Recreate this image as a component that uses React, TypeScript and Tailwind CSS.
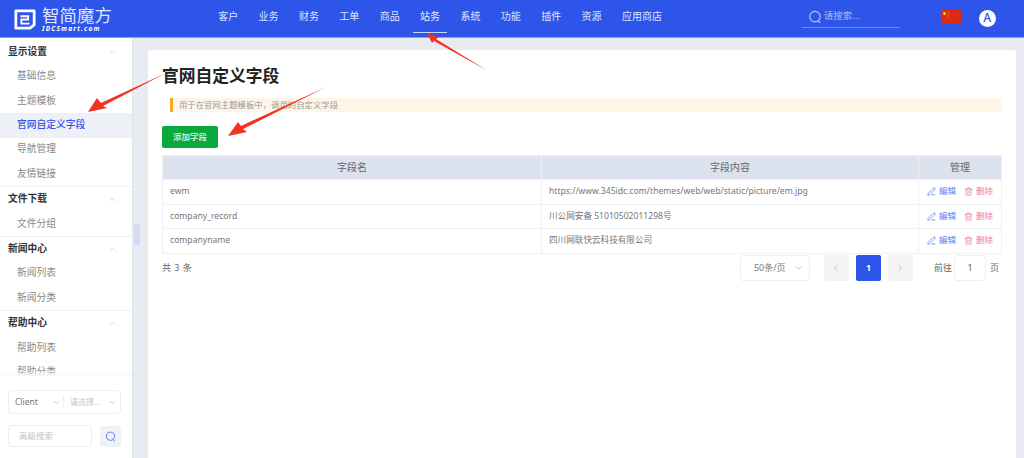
import { ChevronUp, ChevronDown, ChevronLeft, ChevronRight, PenLine, Trash2 } from "lucide-react";

const nav = ["客户", "业务", "财务", "工单", "商品", "站务", "系统", "功能", "插件", "资源", "应用商店"];

const groups = [
  { title: "显示设置", items: ["基础信息", "主题模板", "官网自定义字段", "导航管理", "友情链接"] },
  { title: "文件下载", items: ["文件分组"] },
  { title: "新闻中心", items: ["新闻列表", "新闻分类"] },
  { title: "帮助中心", items: ["帮助列表", "帮助分类"] },
];

const rows = [
  ["ewm", "https://www.345idc.com/themes/web/web/static/picture/em.jpg"],
  ["company_record", "川公网安备 51010502011298号"],
  ["companyname", "四川网联快云科技有限公司"],
];

function SearchIcon({ className }: { className: string }) {
  return (
    <svg viewBox="0 0 16 16" fill="none" stroke="currentColor" strokeWidth="1.3" className={className}>
      <circle cx="8" cy="7.6" r="6" />
      <path d="M11.6 12.4l2.2 2" strokeLinecap="round" />
    </svg>
  );
}

function Arrow({ points }: { points: string }) {
  return <polygon points={points} fill="#f5311f" />;
}

export default function App() {
  return (
    <div
      className="relative flex h-[458px] w-[1024px] flex-col overflow-hidden bg-[#e9ebf2] text-[10px] text-[#666]"
      style={{ fontFamily: '"Noto Sans", "Noto Sans CJK SC", sans-serif' }}
    >
      <header className="flex h-[38px] shrink-0 items-center border-b border-[#8aa0f0] bg-[#2e55e9] text-white">
        <div className="ml-[14px] flex w-[194px] shrink-0 items-center gap-[6px]">
          <svg viewBox="0 0 24 24" className="h-[22px] w-[22px]" fill="none" stroke="white">
            <path d="M2 3h20v15.500L17.500 22H2z" strokeWidth="3" strokeLinejoin="round" />
            <path d="M7 9h8.500v3.500H8v4.500h9" strokeWidth="2" />
          </svg>
          <div className="flex flex-col">
            <span className="text-[17.500px] leading-[20px] text-[#dfe6ff]">智简魔方</span>
            <span className="text-[6.500px] font-bold italic leading-[8px] tracking-[1.200px]">IDCSmart.com</span>
          </div>
        </div>
        <nav className="flex h-full shrink-0">
          {nav.map((n) => (
            <div
              key={n}
              className={`relative flex h-full items-center whitespace-nowrap px-[10.200px] pb-[5px] text-[10px] ${n === "站务" ? "text-[#eef1ff]" : "text-[#dfe6ff]"}`}
            >
              {n}
              {n === "站务" && <span className="absolute bottom-[4px] left-[3px] right-[3px] h-[1px] bg-[#c9d3fa]" />}
            </div>
          ))}
        </nav>
        <div className="mb-[9px] ml-[129.600px] flex h-[22px] w-[98px] shrink-0 items-center gap-[2px] self-end border-b border-[#6f8af0] pl-[6px] text-[9.500px] text-[#a9b9f6]">
          <SearchIcon className="h-[14px] w-[14px] text-[#b9c6f5]" />
          <span>请搜索...</span>
        </div>
        <svg viewBox="0 0 20 14" className="-mt-[3px] ml-[41px] h-[14px] w-[20px] shrink-0">
          <rect width="20" height="14" fill="#de2a12" />
          <circle cx="3.500" cy="3.500" r="1.400" fill="#f7d21e" />
          <circle cx="7" cy="2" r="0.500" fill="#f7d21e" />
          <circle cx="8" cy="4" r="0.500" fill="#f7d21e" />
          <circle cx="7" cy="6" r="0.500" fill="#f7d21e" />
        </svg>
        <div className="-mt-[1px] ml-[18px] flex h-[17px] w-[17px] shrink-0 items-center justify-center rounded-full bg-white text-[12px] font-medium text-[#2e55e9]">A</div>
      </header>

      <div className="flex min-h-0 flex-1">
        <aside className="relative h-full w-[133px] shrink-0 border-r border-[#e2e3e9] bg-white">
          <div className="h-[338px] overflow-hidden pt-[2px]">
            {groups.map((g) => (
              <section key={g.title} className="border-b border-[#f0f1f5]">
                <div className="flex h-[24.400px] items-center justify-between pl-[8px] pr-[14px] text-[9.750px] font-bold text-[#333]">
                  {g.title}
                  <ChevronUp size={11} strokeWidth={1} className="text-[#aaa]" />
                </div>
                {g.items.map((i) => (
                  <div
                    key={i}
                    className={`flex h-[24.400px] items-center pl-[17px] text-[9.750px] ${i === "官网自定义字段" ? "bg-[#eef0f7] font-medium text-[#2e55e9]" : "text-[#888]"}`}
                  >
                    {i}
                  </div>
                ))}
              </section>
            ))}
          </div>
          <div className="relative flex h-[82px] flex-col gap-[11px] bg-white px-[8px] pt-[14px]">
            <div className="absolute -top-[6px] left-0 right-0 h-[6px] bg-gradient-to-b from-transparent to-[#f8f9fe]" />
            <div className="flex h-[24px] w-[113px] items-center rounded-[4px] border border-[#eceef3] text-[8.500px]">
              <span className="w-[37px] shrink-0 pl-[6px] text-[#777]">Client</span>
              <ChevronDown size={9} className="ml-[6px] shrink-0 text-[#bbb]" />
              <span className="ml-[2px] h-[12px] w-px shrink-0 bg-[#eee]" />
              <span className="ml-[6px] w-[32px] shrink-0 whitespace-nowrap text-[8px] text-[#c4c4c4]">请选择...</span>
              <ChevronDown size={9} className="ml-[6px] shrink-0 text-[#bbb]" />
            </div>
            <div className="flex items-center gap-[8px]">
              <div className="flex h-[22px] w-[84px] items-center rounded-[4px] border border-[#eceef3] pl-[10px] text-[8.500px] text-[#c4c4c4]">高级搜索</div>
              <div className="flex h-[21px] w-[21px] items-center justify-center rounded-[4px] bg-[#f0f1f5]">
                <SearchIcon className="h-[11px] w-[11px] text-[#4f6fee]" />
              </div>
            </div>
          </div>
          <div className="absolute -right-[8px] top-[186px] flex h-[21px] w-[6px] items-center justify-center rounded-[2px] bg-[#d3daf3]">
            <ChevronLeft size={6} className="text-white" />
          </div>
        </aside>

        <main className="ml-[15px] mr-[8px] mt-[12px] flex min-w-0 flex-1 flex-col rounded-t-[3px] bg-white px-[14px]">
          <h1 className="mt-[14px] h-[24px] text-[16.750px] font-bold leading-[24px] text-[#222]">官网自定义字段</h1>
          <div className="ml-[8px] mt-[10px] flex h-[14px] items-center border-l-[3px] border-[#f9a825] bg-[#fdf6e8] pl-[6px] text-[8.400px] text-[#999]">
            用于在官网主题模板中，调用的自定义字段
          </div>
          <button className="mt-[14px] h-[22px] w-[56px] rounded-[2px] bg-[#0aa93e] text-[8.500px] font-medium text-[#e8f8ed]">添加字段</button>
          <table className="mt-[7px] w-[840px] table-fixed border border-[#eef0f5] text-[8.600px]">
            <thead>
              <tr className="h-[24px] bg-[#dce2ee] text-[10px] font-normal text-[#666]">
                <th className="w-[379px] border-r border-[#eef0f5] font-normal">字段名</th>
                <th className="w-[377px] border-r border-[#eef0f5] font-normal">字段内容</th>
                <th className="font-normal">管理</th>
              </tr>
            </thead>
            <tbody>
              {rows.map((r) => (
                <tr key={r[0]} className="h-[24.500px] border-t border-[#f0f1f5]">
                  <td className="border-r border-[#f0f1f5] pl-[7px] text-[#777]">{r[0]}</td>
                  <td className="border-r border-[#f0f1f5] pl-[7px] text-[#777]">{r[1]}</td>
                  <td className="pl-[8px]">
                    <div className="flex items-center text-[8.500px]">
                      <PenLine size={9} className="mr-[3px] text-[#5f7df0]" />
                      <span className="text-[#5f7df0]">编辑</span>
                      <Trash2 size={9} className="ml-[8px] mr-[3px] text-[#f37a9c]" />
                      <span className="text-[#f37a9c]">删除</span>
                    </div>
                  </td>
                </tr>
              ))}
            </tbody>
          </table>
          <div className="flex h-[28px] items-center justify-between text-[9px] text-[#666]">
            <span className="tracking-[0.5px]">共 3 条</span>
            <div className="mr-[3px] flex items-center">
              <div className="mr-[14px] flex h-[26px] w-[70px] items-center justify-between rounded-[3px] border border-[#eceef3] pl-[13px] pr-[5px] text-[#777]">
                50条/页
                <ChevronDown size={10} className="text-[#bbb]" />
              </div>
              <div className="flex h-[26px] w-[25px] items-center justify-center rounded-[2px] bg-[#f3f3f5]">
                <ChevronLeft size={10} className="text-[#b8b8b8]" />
              </div>
              <div className="ml-[7px] flex h-[26px] w-[25px] items-center justify-center rounded-[2px] bg-[#2e55e9] font-bold text-white">1</div>
              <div className="ml-[7px] flex h-[26px] w-[25px] items-center justify-center rounded-[2px] bg-[#f3f3f5]">
                <ChevronRight size={10} className="text-[#b8b8b8]" />
              </div>
              <span className="ml-[21px]">前往</span>
              <div className="ml-[2px] mr-[4px] flex h-[26px] w-[32px] items-center justify-center rounded-[4px] border border-[#eceef3]">1</div>
              <span>页</span>
            </div>
          </div>
        </main>
      </div>

      <svg className="pointer-events-none absolute left-0 top-0 h-[458px] w-[1024px]" viewBox="0 0 1024 458">
        <Arrow points="166,73 103,106 107,108 88,112 97,98 101,103" />
        <Arrow points="326,87 243,129 247,132 228,136 238,122 241,126" />
        <Arrow points="488,71 436,39 439,37 427,33 432,43 434,41" />
      </svg>
    </div>
  );
}
